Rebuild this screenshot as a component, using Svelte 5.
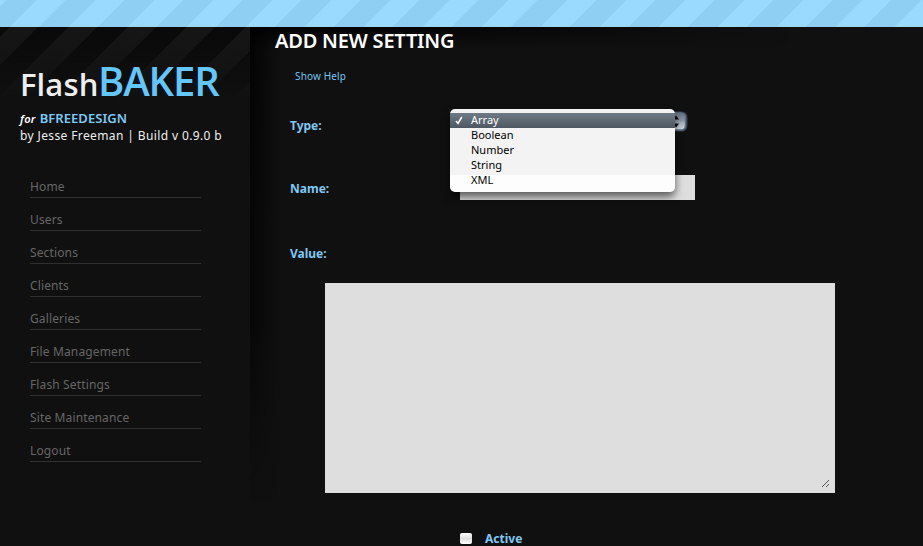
<script>
  const nav = ['Home', 'Users', 'Sections', 'Clients', 'Galleries', 'File Management', 'Flash Settings', 'Site Maintenance', 'Logout'];
  const types = ['Array', 'Boolean', 'Number', 'String', 'XML'];
</script>

<div class="page">
  <header class="ribbon"></header>
  <div class="body">
    <aside>
      <h1><span>Flash</span><strong>BAKER</strong></h1>
      <p class="client"><em>for</em><b>BFREEDESIGN</b></p>
      <p class="byline">by Jesse Freeman | Build v 0.9.0 b</p>
      <nav>
        {#each nav as item}<a href="#top">{item}</a>{/each}
      </nav>
    </aside>
    <main>
      <h2>ADD NEW SETTING</h2>
      <a class="help" href="#help">Show Help</a>
      <div class="row type">
        <span class="label">Type:</span>
        <div class="select">
          <svg class="arrows" width="17" height="21" viewBox="0 0 17 21">
            <defs><linearGradient id="cap" x2="0" y2="1"><stop stop-color="#68717e" /><stop offset=".45" stop-color="#8b96a6" /><stop offset=".55" stop-color="#a3afbd" /><stop offset="1" stop-color="#d2dbe2" /></linearGradient></defs>
            <rect x="-6" y="0.500" width="22.500" height="20" rx="5.500" fill="#33414f" />
            <rect x="-6" y="2" width="20.500" height="17" rx="4.500" fill="url(#cap)" stroke="#5f7386" stroke-width="1.500" />
            <path d="M2 8.500 5 4.500 8 8.500zM2 12.500h6L5 16.500z" fill="#08090b" />
          </svg>
          <ul>
            {#each types as type, i}
              <li class:selected={i === 0}>
                {#if i === 0}<svg width="8" height="9" viewBox="0 0 8 9"><path d="M1 5 3 7.500 6.800 1" fill="none" stroke="#fff" stroke-width="1.500" /></svg>{/if}<span>{type}</span>
              </li>
            {/each}
          </ul>
        </div>
      </div>
      <div class="row name"><span class="label">Name:</span><div class="input"></div></div>
      <div class="row value"><span class="label">Value:</span></div>
      <div class="textarea">
        <svg width="9" height="9" viewBox="0 0 9 9"><path d="M1 8 8 1M5 8 8 5" stroke="#555" fill="none" /></svg>
      </div>
      <div class="active"><i></i><span class="label">Active</span></div>
    </main>
  </div>
</div>

<style>
  :global(body) { background: #101010; overflow: hidden; }
  .page { width: 923px; height: 546px; overflow: hidden; display: flex; flex-direction: column; background: #101010; font-family: 'Noto Sans', 'Open Sans', sans-serif; }
  .ribbon { height: 27px; flex: none; background: repeating-linear-gradient(135deg, #9adaff 0 4.5px, #8fcff4 5px 25.8px, #9adaff 26.3px 41.7px); }
  .body { display: flex; flex: 1; min-height: 0; }
  aside { width: 250px; flex: none; box-sizing: border-box; padding-left: 20px; background: linear-gradient(#10101000, #101010 75px), repeating-linear-gradient(135deg, #090909 0 6.7px, #161616 7.2px 26.7px, #090909 27.2px 41.7px); }
  h1, h2, p, ul { margin: 0; padding: 0; }
  h1 { margin-top: 26px; height: 57px; line-height: 55px; display: flex; align-items: baseline; font-family: 'Open Sans', sans-serif; white-space: nowrap; }
  h1 span { width: 78px; font-size: 31px; font-weight: 600; color: #eee; letter-spacing: .1px; }
  h1 strong { font-size: 40px; font-weight: 600; color: #62c7ff; letter-spacing: -1.1px; }
  .client { height: 17px; line-height: 17px; display: flex; align-items: baseline; gap: 4px; }
  .client em { font-size: 11px; font-weight: 600; color: #fff; letter-spacing: .3px; }
  .client b { font-size: 13px; font-weight: 600; color: #7dcbf5; letter-spacing: .05px; }
  .byline { height: 17px; line-height: 17px; font-size: 12px; letter-spacing: .38px; color: #eee; white-space: nowrap; }
  nav { width: 171px; margin: 21px 0 0 10px; }
  nav a { display: block; box-sizing: border-box; height: 33px; padding-top: 13px; line-height: 17px; font-size: 12px; letter-spacing: .13px; color: #666; border-bottom: 1px solid #303030; text-decoration: none; }
  main { position: relative; z-index: 0; flex: 1; display: flex; flex-direction: column; align-items: flex-start; }
  main > * { flex: none; }
  main::before, main::after { content: ''; position: absolute; z-index: -1; left: 0; top: 0; }
  main::before { width: 30px; height: 475px; background: linear-gradient(90deg, #000c, #0000); mask-image: linear-gradient(#000, #000b 60%, #0000); }
  main::after { width: 540px; height: 22px; background: linear-gradient(#000b, #0000); mask-image: linear-gradient(90deg, #000 30%, #0000); }
  h2 { margin-left: 25px; height: 28px; line-height: 28px; font-size: 20px; font-weight: 600; color: #fff; white-space: nowrap; letter-spacing: -.2px; }
  .help { margin: 13px 0 0 45px; height: 16px; line-height: 16px; font-size: 10px; letter-spacing: .15px; color: #72c5ef; text-decoration: none; }
  .row { display: flex; margin-left: 40px; }
  .label { font-size: 12px; line-height: 18px; font-weight: 700; color: #7fc8f2; }
  .row .label { width: 160px; }
  .type { margin-top: 25px; height: 39px; padding-top: 8px; box-sizing: border-box; }
  .select { position: relative; width: 238px; height: 21px; margin-top: -6px; display: flex; justify-content: flex-end; }
  .arrows { display: block; }
  ul { position: absolute; z-index: 2; left: 0; top: -2px; width: 225px; height: 83px; box-sizing: border-box; padding-top: 4px; border-radius: 5px; list-style: none; background: linear-gradient(#f3f3f3 66px, #fdfdfd 66px); box-shadow: 0 5px 9px #0009; }
  li { position: relative; display: flex; height: 15px; line-height: 13px; padding-left: 21px; font-size: 11px; color: #000; }
  li.selected { color: #fff; background: linear-gradient(#6f7a84, #4d5863); }
  li svg { position: absolute; left: 5px; top: 3px; }
  .name { margin-top: 27px; height: 25px; }
  .name .label { padding-top: 5px; }
  .input { width: 235px; height: 25px; margin-left: 10px; background: #dedede; }
  .value { margin-top: 45px; height: 38px; }
  .textarea { width: 510px; height: 210px; margin-left: 75px; background: #dedede; display: flex; align-items: flex-end; justify-content: flex-end; }
  .textarea svg { margin: 0 5px 5px 0; }
  .active { display: flex; align-items: flex-start; gap: 13px; margin: 37px 0 0 210px; }
  .active i { width: 12px; height: 11px; margin-top: 3px; border-radius: 2px; background: linear-gradient(#fff, #ddd 50%, #fff); }
</style>
